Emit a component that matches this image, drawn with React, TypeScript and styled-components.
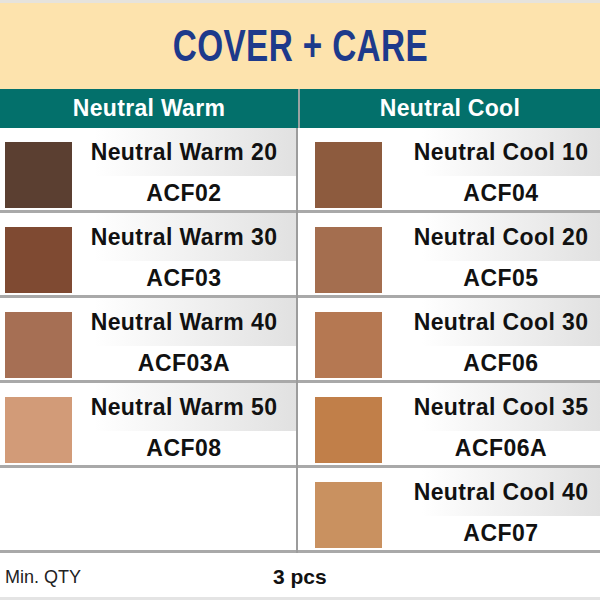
import React from 'react'
import styled, { createGlobalStyle } from 'styled-components'

const GlobalStyle = createGlobalStyle`
  html, body {
    margin: 0;
    padding: 0;
    background: #ffffff;
  }
  body {
    font-family: "Liberation Sans", Arial, sans-serif;
  }
`

interface Shade {
  name: string
  code: string
  color: string
}

const warmShades: Shade[] = [
  { name: 'Neutral Warm 20', code: 'ACF02', color: '#5b3f31' },
  { name: 'Neutral Warm 30', code: 'ACF03', color: '#7f4a32' },
  { name: 'Neutral Warm 40', code: 'ACF03A', color: '#a66f54' },
  { name: 'Neutral Warm 50', code: 'ACF08', color: '#d29b78' },
]

const coolShades: Shade[] = [
  { name: 'Neutral Cool 10', code: 'ACF04', color: '#8d5b3e' },
  { name: 'Neutral Cool 20', code: 'ACF05', color: '#a46e4f' },
  { name: 'Neutral Cool 30', code: 'ACF06', color: '#b57852' },
  { name: 'Neutral Cool 35', code: 'ACF06A', color: '#c17f49' },
  { name: 'Neutral Cool 40', code: 'ACF07', color: '#c99160' },
]

const Page = styled.div`
  width: 600px;
  height: 600px;
  overflow: hidden;
  display: flex;
  flex-direction: column;
  background: #fff;
  border-top: 3px solid #e6e3dc;
  box-sizing: border-box;
`

const Banner = styled.div`
  height: 86px;
  background: #fde3ad;
  display: flex;
  align-items: center;
  justify-content: center;
`

const Title = styled.h1`
  margin: 0;
  font-family: "Liberation Sans", Arial, sans-serif;
  font-size: 45px;
  font-weight: 700;
  color: #1d3a8b;
  transform: scaleX(0.74);
  white-space: nowrap;
  letter-spacing: 0.5px;
`

const ColumnHeads = styled.div`
  display: grid;
  grid-template-columns: 298px 2px 300px;
  height: 39px;
  background: #03706b;
`

const HeadCell = styled.div`
  display: flex;
  align-items: center;
  justify-content: center;
  color: #fff;
  font-size: 23px;
  font-weight: 700;
  letter-spacing: 0.3px;
`

const HeadDivider = styled.div`
  background: #9aa3a2;
`

const Body = styled.div`
  display: grid;
  grid-template-columns: 298px 302px;
`

const Column = styled.div<{ $side: 'left' | 'right' }>`
  display: flex;
  flex-direction: column;
  border-right: ${({ $side }) => ($side === 'left' ? '2px solid #9c9c9c' : 'none')};
`

const Row = styled.div`
  height: 85px;
  box-sizing: border-box;
  border-bottom: 3px solid #a9a9a9;
  display: flex;
`

const Swatch = styled.div<{ $side: 'left' | 'right' }>`
  width: 67px;
  height: 66px;
  margin-top: 14px;
  margin-left: ${({ $side }) => ($side === 'left' ? '5px' : '17px')};
  flex-shrink: 0;
`

const Info = styled.div<{ $side: 'left' | 'right' }>`
  flex: 1;
  display: flex;
  flex-direction: column;
  padding-left: ${({ $side }) => ($side === 'left' ? '0' : '20px')};
`

const NameBox = styled.div`
  height: 48px;
  display: flex;
  align-items: center;
  justify-content: center;
  background: linear-gradient(to right, rgba(255, 255, 255, 0) 10%, #e1e1e1 100%);
  font-size: 23px;
  font-weight: 700;
  color: #111;
  letter-spacing: 0.4px;
  white-space: nowrap;
`

const CodeBox = styled.div`
  flex: 1;
  display: flex;
  align-items: center;
  justify-content: center;
  font-size: 23px;
  font-weight: 700;
  color: #111;
  letter-spacing: 0.5px;
`

const Footer = styled.div`
  flex: 1;
  display: flex;
  align-items: center;
  padding-top: 4px;
  border-bottom: 3px solid #e4e4e4;
`

const FooterLabel = styled.span`
  width: 273px;
  padding-left: 5px;
  box-sizing: border-box;
  font-size: 18px;
  color: #222;
`

const FooterValue = styled.span`
  font-size: 21px;
  font-weight: 700;
  color: #111;
`

const ShadeRow: React.FC<{ shade: Shade; side: 'left' | 'right' }> = ({ shade, side }) => (
  <Row>
    <Swatch $side={side} style={{ background: shade.color }} />
    <Info $side={side}>
      <NameBox>{shade.name}</NameBox>
      <CodeBox>{shade.code}</CodeBox>
    </Info>
  </Row>
)

export default function App() {
  return (
    <>
      <GlobalStyle />
      <Page>
        <Banner>
          <Title>COVER + CARE</Title>
        </Banner>
        <ColumnHeads>
          <HeadCell>Neutral Warm</HeadCell>
          <HeadDivider />
          <HeadCell>Neutral Cool</HeadCell>
        </ColumnHeads>
        <Body>
          <Column $side="left">
            {warmShades.map((s) => (
              <ShadeRow key={s.code} shade={s} side="left" />
            ))}
            <Row />
          </Column>
          <Column $side="right">
            {coolShades.map((s) => (
              <ShadeRow key={s.code} shade={s} side="right" />
            ))}
          </Column>
        </Body>
        <Footer>
          <FooterLabel>Min. QTY</FooterLabel>
          <FooterValue>3 pcs</FooterValue>
        </Footer>
      </Page>
    </>
  )
}
